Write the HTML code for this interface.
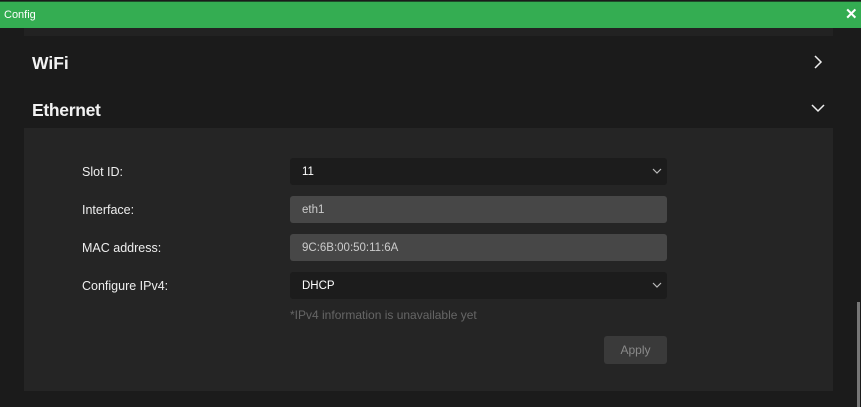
<!DOCTYPE html><html><head><style>
body{margin:0;width:861px;height:407px;background:#1b1b1b;font-family:"Liberation Sans",sans-serif;position:relative;overflow:hidden}
.a{position:absolute}
.bar{left:0;top:1px;width:861px;height:27px;background:#34ad52;border-top:1px solid #1e4d2a;box-sizing:border-box}
.t{color:#fff;font-size:12px}
.lbl{left:82px;color:#eee;font-size:12.5px}
.f{left:290px;width:377px;height:27px;border-radius:3px;box-sizing:border-box;padding-left:12px;line-height:29px;font-size:11.5px}
.sel{background:#1c1c1c;color:#fff}
.in{background:#474747;color:#ccc}
</style></head><body>
<div class="a bar"></div>
<div class="a t" style="left:4px;top:9px;font-size:11px">Config</div>
<div class="a" style="left:845px;top:5px;color:#fff;font-size:15px;font-weight:bold">✕</div>
<div class="a" style="left:24px;top:28px;width:809px;height:8px;background:#222"></div>
<div class="a" style="left:32px;top:53px;color:#f2f2f2;font-size:17.5px;font-weight:bold">WiFi</div>
<div class="a" style="left:32px;top:100px;color:#f2f2f2;font-size:17.5px;font-weight:bold;letter-spacing:-0.3px">Ethernet</div>
<svg class="a" style="left:812px;top:54px" width="12" height="16"><path d="M3 2l6 6-6 6" stroke="#eee" stroke-width="1.5" fill="none"/></svg>
<svg class="a" style="left:810px;top:102px" width="16" height="12"><path d="M2 3l6 6 6-6" stroke="#eee" stroke-width="1.5" fill="none"/></svg>
<div class="a" style="left:24px;top:128px;width:809px;height:263px;background:#252525"></div>
<div class="a lbl" style="top:165px">Slot ID:</div>
<div class="a lbl" style="top:203px">Interface:</div>
<div class="a lbl" style="top:241px">MAC address:</div>
<div class="a lbl" style="top:279px">Configure IPv4:</div>
<div class="a f sel" style="top:158px">11</div>
<div class="a f in" style="top:196px">eth1</div>
<div class="a f in" style="top:234px">9C:6B:00:50:11:6A</div>
<div class="a f sel" style="top:272px">DHCP</div>
<svg class="a" style="left:652px;top:167px" width="10" height="8"><path d="M1 2l4 4 4-4" stroke="#bbb" stroke-width="1.2" fill="none"/></svg>
<svg class="a" style="left:652px;top:281px" width="10" height="8"><path d="M1 2l4 4 4-4" stroke="#bbb" stroke-width="1.2" fill="none"/></svg>
<div class="a" style="left:290px;top:308px;color:#666;font-size:12px">*IPv4 information is unavailable yet</div>
<div class="a" style="left:604px;top:336px;width:63px;height:28px;background:#3a3a3a;border-radius:3px;color:#8a8a8a;font-size:12px;line-height:28px;text-align:center">Apply</div>
<div class="a" style="left:857px;top:302px;width:3px;height:105px;background:#777"></div>
</body></html>
